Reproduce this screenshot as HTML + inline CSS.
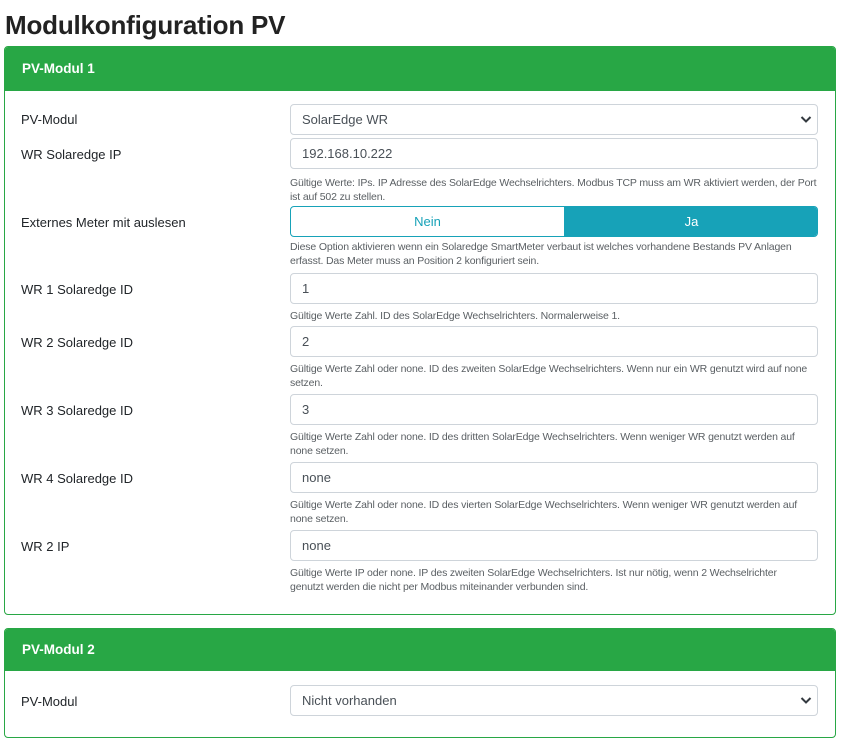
<!DOCTYPE html>
<html><head><meta charset="utf-8"><style>
body{margin:0;width:847px;height:741px;background:#fff;font-family:"Liberation Sans",sans-serif;color:#212529;position:relative;overflow:hidden}
.a{position:absolute}
h1{position:absolute;left:5px;top:9px;margin:0;font-size:26px;font-weight:bold;line-height:32px;letter-spacing:-0.2px;color:#222}
.card{position:absolute;left:4px;width:830px;border:1px solid #28a745;border-radius:4px;overflow:hidden}
.hd{background:#28a745;color:#fff;font-weight:bold;font-size:13.5px;padding-left:17px;box-sizing:border-box}
.lbl{position:absolute;left:21px;font-size:13px}
.in{position:absolute;left:290px;width:528px;height:31px;box-sizing:border-box;border:1px solid #ced4da;border-radius:4px;font-size:13px;line-height:29px;padding-left:11px;color:#495057}
.help{position:absolute;left:290px;white-space:nowrap;font-size:10.5px;line-height:14px;color:#5a5f63;letter-spacing:-0.15px}
.chev{position:absolute;right:5px;top:9px}
</style></head><body>
<h1>Modulkonfiguration PV</h1>
<div class="card" style="top:46px;height:567px"><div class="hd" style="height:44px;line-height:44px">PV-Modul 1</div></div>
<div class="card" style="top:628px;height:108px"><div class="hd" style="height:42px;line-height:42px">PV-Modul 2</div></div>

<div class="lbl" style="top:112px">PV-Modul</div>
<div class="in" style="top:104px">SolarEdge WR<svg class="chev" width="12" height="10" viewBox="0 0 12 10"><path d="M1.5 3 L6 7.5 L10.5 3" fill="none" stroke="#343a40" stroke-width="2"/></svg></div>

<div class="lbl" style="top:147px">WR Solaredge IP</div>
<div class="in" style="top:138px">192.168.10.222</div>
<div class="help" style="top:176px">Gültige Werte: IPs. IP Adresse des SolarEdge Wechselrichters. Modbus TCP muss am WR aktiviert werden, der Port<br>ist auf 502 zu stellen.</div>

<div class="lbl" style="top:215px">Externes Meter mit auslesen</div>
<div class="a" style="left:290px;top:206px;width:528px;height:31px;box-sizing:border-box;border:1px solid #17a2b8;border-radius:4px;overflow:hidden;font-size:13px;line-height:29px">
<div class="a" style="left:0;top:0;width:273px;height:29px;text-align:center;color:#17a2b8">Nein</div>
<div class="a" style="left:273px;top:0;width:255px;height:29px;text-align:center;color:#fff;background:#17a2b8">Ja</div></div>
<div class="help" style="top:240px">Diese Option aktivieren wenn ein Solaredge SmartMeter verbaut ist welches vorhandene Bestands PV Anlagen<br>erfasst. Das Meter muss an Position 2 konfiguriert sein.</div>

<div class="lbl" style="top:282px">WR 1 Solaredge ID</div>
<div class="in" style="top:273px">1</div>
<div class="help" style="top:309px">Gültige Werte Zahl. ID des SolarEdge Wechselrichters. Normalerweise 1.</div>

<div class="lbl" style="top:335px">WR 2 Solaredge ID</div>
<div class="in" style="top:326px">2</div>
<div class="help" style="top:362px">Gültige Werte Zahl oder none. ID des zweiten SolarEdge Wechselrichters. Wenn nur ein WR genutzt wird auf none<br>setzen.</div>

<div class="lbl" style="top:403px">WR 3 Solaredge ID</div>
<div class="in" style="top:394px">3</div>
<div class="help" style="top:430px">Gültige Werte Zahl oder none. ID des dritten SolarEdge Wechselrichters. Wenn weniger WR genutzt werden auf<br>none setzen.</div>

<div class="lbl" style="top:471px">WR 4 Solaredge ID</div>
<div class="in" style="top:462px">none</div>
<div class="help" style="top:498px">Gültige Werte Zahl oder none. ID des vierten SolarEdge Wechselrichters. Wenn weniger WR genutzt werden auf<br>none setzen.</div>

<div class="lbl" style="top:539px">WR 2 IP</div>
<div class="in" style="top:530px">none</div>
<div class="help" style="top:566px">Gültige Werte IP oder none. IP des zweiten SolarEdge Wechselrichters. Ist nur nötig, wenn 2 Wechselrichter<br>genutzt werden die nicht per Modbus miteinander verbunden sind.</div>

<div class="lbl" style="top:694px">PV-Modul</div>
<div class="in" style="top:685px">Nicht vorhanden<svg class="chev" width="12" height="10" viewBox="0 0 12 10"><path d="M1.5 3 L6 7.5 L10.5 3" fill="none" stroke="#343a40" stroke-width="2"/></svg></div>
</body></html>
